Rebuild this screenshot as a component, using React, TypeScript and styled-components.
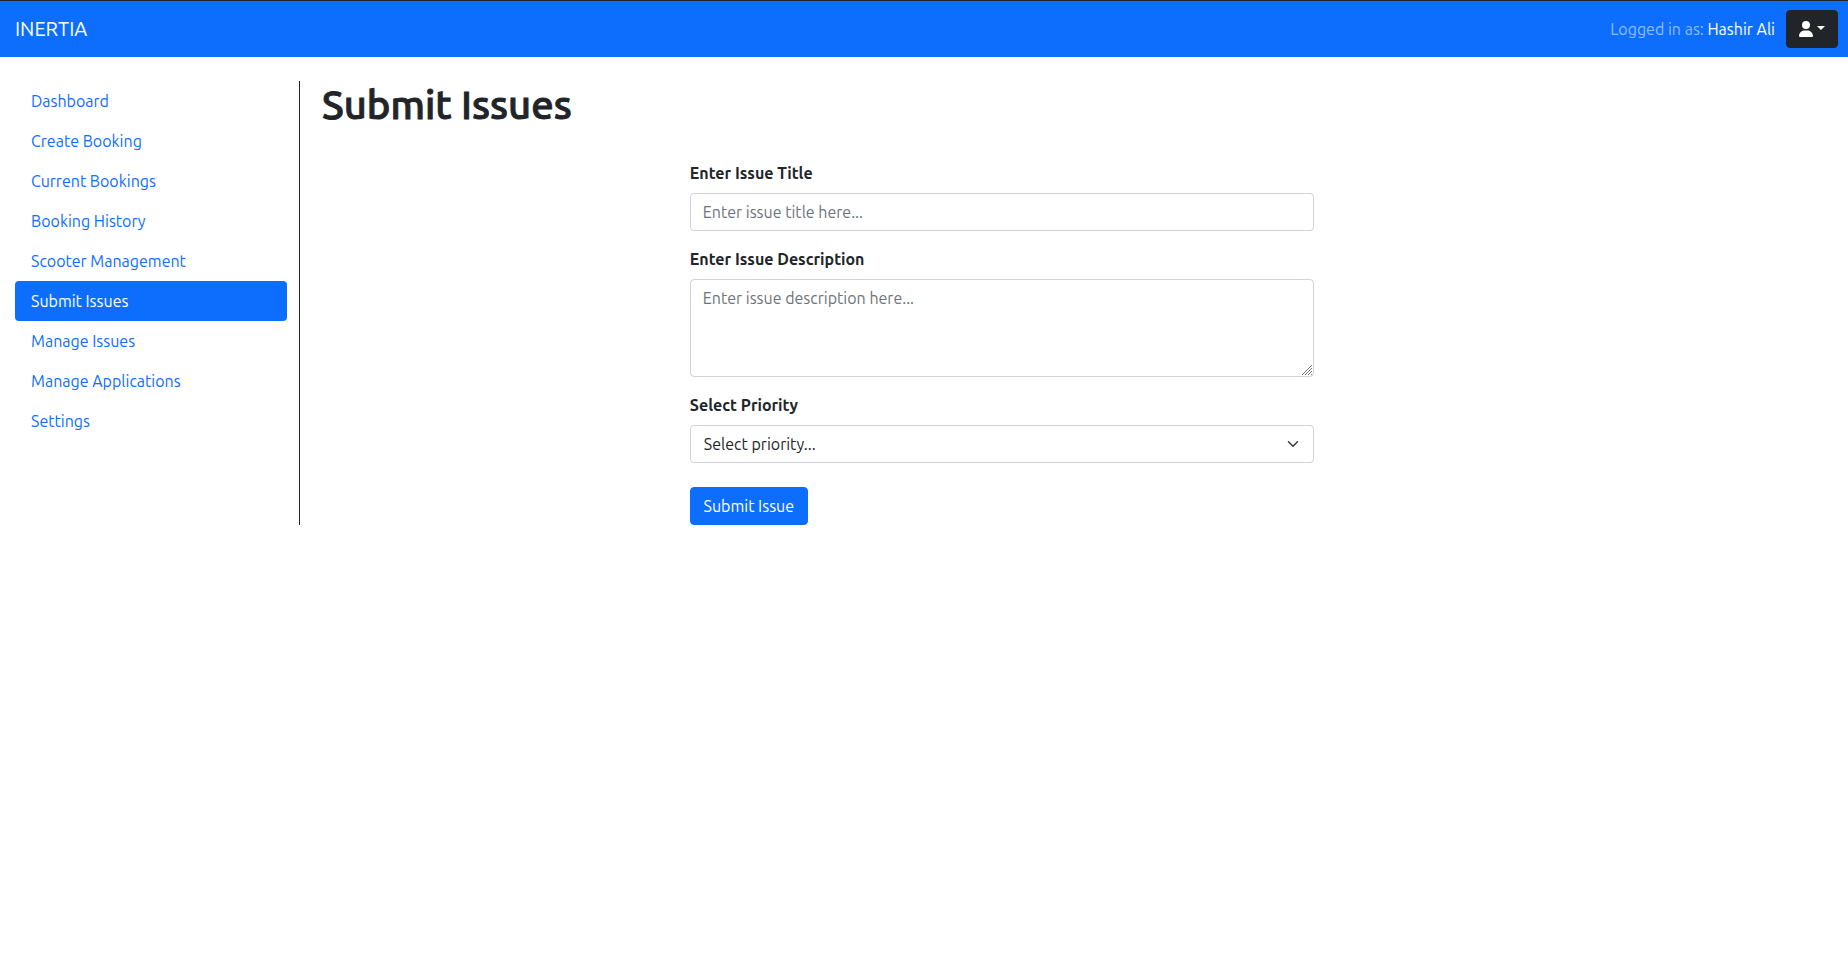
import React, { useState } from "react";
import styled, { createGlobalStyle } from "styled-components";
import { FaUser } from "react-icons/fa6";

const GlobalStyle = createGlobalStyle`
  *, *::before, *::after { box-sizing: border-box; }
  body {
    margin: 0;
    background: #fff;
    color: #212529;
    font-family: Ubuntu, "Noto Sans", sans-serif;
    font-size: 16px;
    line-height: 24px;
  }
  input, textarea, select, button { font: inherit; color: inherit; }
`;

const Navbar = styled.header`
  display: flex;
  align-items: center;
  justify-content: space-between;
  min-height: 57px;
  padding: 0 10px 0 15px;
  background: #0d6efd;
  border-top: 1px solid #212529;
`;

const Brand = styled.a`
  color: #fff;
  font-size: 20px;
  line-height: 30px;
  text-decoration: none;
`;

const Account = styled.div`
  display: flex;
  align-items: center;
  gap: 11px;
`;

const LoginText = styled.span`
  color: rgba(255, 255, 255, 0.55);
`;

const UserLink = styled.a`
  color: #fff;
  text-decoration: none;
`;

const Button = styled.button`
  display: inline-flex;
  align-items: center;
  justify-content: center;
  height: 38px;
  padding: 0 12px;
  border: 1px solid #0d6efd;
  border-radius: 4px;
  background: #0d6efd;
  color: #fff;
  cursor: pointer;
`;

const AccountButton = styled(Button)`
  border-color: #212529;
  background: #212529;
`;

const SubmitButton = styled(Button)`
  min-width: 118px;
`;

const UserIcon = styled(FaUser)`
  width: 14px;
  height: 16px;
`;

const Caret = styled.span`
  margin: 0 0 2px 4px;
  border-top: 4px solid #fff;
  border-left: 4px solid transparent;
  border-right: 4px solid transparent;
`;

const Layout = styled.div`
  display: flex;
  padding-top: 24px;
`;

const Sidebar = styled.nav`
  flex: 0 0 300px;
  padding: 0 12px 0 15px;
  border-right: 1px solid #212529;
`;

const NavLink = styled.a<{ $active?: boolean }>`
  display: block;
  padding: 8px 16px;
  border-radius: 4px;
  background: ${(p) => (p.$active ? "#0d6efd" : "transparent")};
  color: ${(p) => (p.$active ? "#fff" : "#0d6efd")};
  text-decoration: none;
`;

const Main = styled.main`
  flex: 1;
  min-width: 0;
  padding: 0 9% 0 22px;
`;

const Title = styled.h1`
  margin: 0 0 32px;
  font-size: 40px;
  font-weight: 500;
  line-height: 48px;
  -webkit-text-stroke: 1px currentColor;
`;

const Form = styled.form`
  width: 100%;
  max-width: 624px;
  margin: 0 auto;
`;

const Field = styled.div<{ $last?: boolean }>`
  display: flex;
  flex-direction: column;
  gap: 8px;
  margin-bottom: ${(p) => (p.$last ? 24 : 16)}px;
`;

const Label = styled.label`
  font-weight: 700;
`;

const Input = styled.input`
  width: 100%;
  height: 38px;
  padding: 6px 12px;
  border: 1px solid #ced4da;
  border-radius: 4px;
  background: #fff;
  &::placeholder { color: #6c757d; opacity: 1; }
`;

const TextArea = styled(Input).attrs({ as: "textarea" })`
  display: block;
  height: 98px;
  resize: vertical;

  &::-webkit-resizer {
    background: url("data:image/svg+xml,%3Csvg xmlns='http://www.w3.org/2000/svg' width='12' height='12' stroke='%23777'%3E%3Cpath d='M1 11L11 1M4 11L11 4M7 11L11 7M10 11L11 10'/%3E%3C/svg%3E") right bottom no-repeat;
  }
`;

const SelectBox = styled.div`
  display: grid;
  align-items: center;
  > * { grid-area: 1 / 1; }
`;

const Select = styled.select`
  width: 100%;
  height: 38px;
  padding: 6px 36px 6px 13px;
  border: 1px solid #ced4da;
  border-radius: 4px;
  background: #fff;
  appearance: none;
`;

const Chevron = styled.svg`
  justify-self: end;
  width: 12px;
  height: 12px;
  margin-right: 15px;
  pointer-events: none;
`;

const links = [
  "Dashboard",
  "Create Booking",
  "Current Bookings",
  "Booking History",
  "Scooter Management",
  "Submit Issues",
  "Manage Issues",
  "Manage Applications",
  "Settings",
];

export default function App() {
  const [priority, setPriority] = useState("");
  return (
    <>
      <GlobalStyle />
      <Navbar>
        <Brand href="#">INERTIA</Brand>
        <Account>
          <LoginText>
            Logged in as: <UserLink href="#">Hashir Ali</UserLink>
          </LoginText>
          <AccountButton type="button" aria-label="Account menu">
            <UserIcon />
            <Caret />
          </AccountButton>
        </Account>
      </Navbar>
      <Layout>
        <Sidebar>
          {links.map((name) => (
            <NavLink key={name} href="#" $active={name === "Submit Issues"}>
              {name}
            </NavLink>
          ))}
        </Sidebar>
        <Main>
          <Title>Submit Issues</Title>
          <Form onSubmit={(e) => e.preventDefault()}>
            <Field>
              <Label htmlFor="title">Enter Issue Title</Label>
              <Input id="title" placeholder="Enter issue title here..." />
            </Field>
            <Field>
              <Label htmlFor="description">Enter Issue Description</Label>
              <TextArea id="description" placeholder="Enter issue description here..." />
            </Field>
            <Field $last>
              <Label htmlFor="priority">Select Priority</Label>
              <SelectBox>
                <Select id="priority" value={priority} onChange={(e) => setPriority(e.target.value)}>
                  <option value="">Select priority...</option>
                  <option value="low">Low</option>
                  <option value="high">High</option>
                </Select>
                <Chevron viewBox="0 0 16 16" fill="none" stroke="#343a40" strokeWidth="2" strokeLinecap="round" strokeLinejoin="round">
                  <path d="M2 5l6 6 6-6" />
                </Chevron>
              </SelectBox>
            </Field>
            <SubmitButton type="submit">Submit Issue</SubmitButton>
          </Form>
        </Main>
      </Layout>
    </>
  );
}
